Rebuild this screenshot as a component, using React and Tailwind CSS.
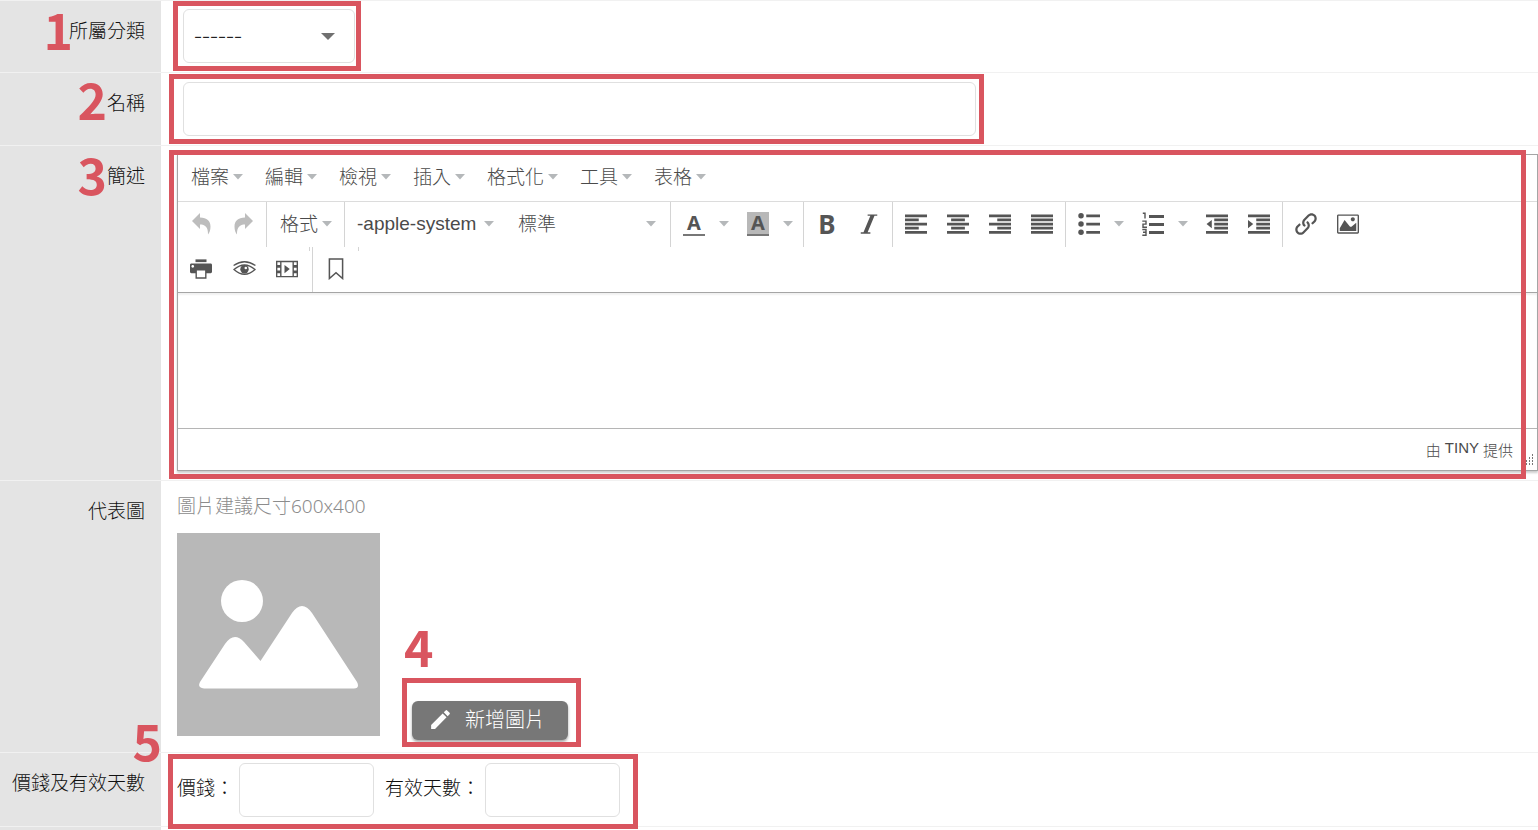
import React, { useState } from 'react'
import { ImItalic, ImPrinter, ImLink, ImImage } from 'react-icons/im'
import { MdEdit } from 'react-icons/md'

const menus = ['檔案', '編輯', '檢視', '插入', '格式化', '工具', '表格']

function Caret({ className = '' }) {
  return (
    <svg width="10" height="6" viewBox="0 0 10 6" className={`shrink-0 ${className}`} aria-hidden="true">
      <path d="M0 0h10L5 5.5z" fill="#b5b8ba" />
    </svg>
  )
}

// red frame drawn over a field
function Mark({ className }) {
  return <div className={`pointer-events-none absolute z-10 border-5 border-[#d9555f] ${className}`} />
}

function Step({ n, className }) {
  return (
    <span className={`pointer-events-none absolute z-10 text-[50px] leading-[50px] font-bold text-[#d9555f] font-['Noto_Sans_CJK_TC',sans-serif] ${className}`}>
      {n}
    </span>
  )
}

function Row({ label, id, step, children, className }) {
  return (
    <div className="flex border-t border-[#f1f1f1]">
      <div className="relative w-[161px] shrink-0 bg-[#e4e4e4] pt-[18px] pr-4 text-right text-[#111]">
        <label htmlFor={id} className="block leading-6">{label}</label>
        {step}
      </div>
      <div className={`min-w-0 flex-1 pl-4 ${className}`}>{children}</div>
    </div>
  )
}

function Group({ children, last }) {
  return (
    <div className={last ? 'flex px-0.5' : 'flex border-r border-[#d4d4d4] px-0.5'}>{children}</div>
  )
}

function Tool({ title, children }) {
  return (
    <button type="button" aria-label={title} className="flex w-[42px] items-center justify-center text-[#555]">
      {children}
    </button>
  )
}

function SplitTool({ title, children }) {
  return (
    <div className="flex">
      <Tool title={title}>{children}</Tool>
      <button type="button" aria-label={title + '選項'} className="flex w-[22px] items-center pl-1"><Caret /></button>
    </div>
  )
}

function Icon({ children }) {
  return (
    <svg width="22" height="22" viewBox="0 0 16 16" fill="currentColor" aria-hidden="true">{children}</svg>
  )
}

const AlignLeft = () => <Icon><path d="M0 1h16v2H0zM0 4h10v2H0zM0 7h16v2H0zM0 10h10v2H0zM0 13h16v2H0z" /></Icon>
const AlignCenter = () => <Icon><path d="M0 1h16v2H0zM3 4h10v2H3zM0 7h16v2H0zM3 10h10v2H3zM0 13h16v2H0z" /></Icon>
const AlignRight = () => <Icon><path d="M0 1h16v2H0zM6 4h10v2H6zM0 7h16v2H0zM6 10h10v2H6zM0 13h16v2H0z" /></Icon>
const Justify = () => <Icon><path d="M0 1h16v2H0zM0 4h16v2H0zM0 7h16v2H0zM0 10h16v2H0zM0 13h16v2H0z" /></Icon>
const Outdent = () => <Icon><path d="M0 1h16v2H0zM6 4h10v2H6zM6 7h10v2H6zM6 10h10v2H6zM0 13h16v2H0zM4.2 5v6L.4 8z" /></Icon>
const Indent = () => <Icon><path d="M0 1h16v2H0zM6 4h10v2H6zM6 7h10v2H6zM6 10h10v2H6zM0 13h16v2H0zM0 5v6l3.8-3z" /></Icon>

const Undo = () => (
  <svg width="19" height="22" viewBox="0 0 19 22" fill="#bdbdbd" aria-hidden="true">
    <path d="M0 8 8 0v4.500C15 4.500 18.500 8 18.500 13.500 18.500 17 17.500 20 16 21.500 16.200 14 13 11.500 8 11.500V16z" />
  </svg>
)

const Redo = () => (
  <svg width="19" height="22" viewBox="0 0 19 22" fill="#bdbdbd" aria-hidden="true">
    <path d="M19 8 11 0v4.500C4 4.500 .5 8 .5 13.500 .5 17 1.500 20 3 21.500 2.800 14 6 11.500 11 11.500V16z" />
  </svg>
)

const Bullets = () => (
  <Icon>
    <circle cx="2.2" cy="2" r="2" /><circle cx="2.2" cy="8" r="2" /><circle cx="2.2" cy="14" r="2" />
    <path d="M6 1h10v2H6zM6 7h10v2H6zM6 13h10v2H6z" />
  </Icon>
)

const Numbers = () => (
  <svg width="22" height="24" viewBox="0 0 22 24" fill="currentColor" aria-hidden="true">
    <path d="M7 3h15v3H7zM7 11h15v3H7zM7 19h15v3H7z" />
    <path d="M.8 1.200H3V6.500M.3 9.100H4V12.100H1V15.200H5M.3 17.500H4V23.200H.3M1 20.300H4" fill="none" stroke="currentColor" strokeWidth="1.400" />
  </svg>
)

const Eye = () => (
  <svg width="23" height="16" viewBox="0 0 23 16" fill="none" stroke="currentColor" aria-hidden="true">
    <path d="M.6 4.500Q11.500-3 22.400 4.500" strokeWidth="1.300" />
    <path d="M1 8.500Q11.500-.5 22 8.500 11.500 18 1 8.500z" strokeWidth="1.300" />
    <circle cx="11.500" cy="8.300" r="4.200" fill="currentColor" stroke="none" />
    <circle cx="12.800" cy="7" r="1.300" fill="#fff" stroke="none" />
  </svg>
)

const Media = () => (
  <Icon>
    <path fillRule="evenodd" d="M0 2v12h16V2zm3 11H1v-2h2zm0-4H1V7h2zm0-4H1V3h2zm9 8H4V3h8zm3 0h-2v-2h2zm0-4h-2V7h2zm0-4h-2V3h2z" />
    <path d="M6.2 5v6L10 8z" />
  </Icon>
)

const Bookmark = () => (
  <Icon><path d="M3.200.7h9.600v14.200L8 10.700l-4.800 4.200z" fill="none" stroke="currentColor" strokeWidth="1.1" /></Icon>
)

function Editor() {
  return (
    <div className="relative">
      <div className="border border-[#a5a5a5] bg-white text-[#4a4a4a] shadow-[0_2px_2px_rgba(0,0,0,0.2)]">
        <div className="flex h-[47px] items-center gap-[22px] border-b border-[#dcdcdc] pb-0.5 pl-[13px]">
          {menus.map(m => (
            <button type="button" key={m} className="flex items-center gap-1">{m}<Caret /></button>
          ))}
        </div>
        <div className="flex h-[45px] *:*:pb-0.5">
          <Group>
            <Tool title="復原"><Undo /></Tool>
            <Tool title="重做"><Redo /></Tool>
          </Group>
          <Group>
            <button type="button" className="flex w-[73px] items-center gap-1 pl-[11px]">格式<Caret /></button>
          </Group>
          <Group>
            <button type="button" className="flex w-[159px] items-center gap-2 pl-[10px] font-['Liberation_Sans',sans-serif] font-normal">
              -apple-system<Caret />
            </button>
            <button type="button" className="flex w-[162px] items-center justify-between pr-3 pl-3">標準<Caret /></button>
          </Group>
          <Group>
            <SplitTool title="文字顏色">
              <span className="w-[22px] border-b-2 border-[#777] font-['Noto_Sans',sans-serif] text-xl leading-[22px] font-bold">A</span>
            </SplitTool>
            <SplitTool title="背景顏色">
              <span className="w-[22px] border-b-2 border-[#777] bg-[#b8b8b8] font-['Noto_Sans',sans-serif] text-xl leading-[22px] font-bold">A</span>
            </SplitTool>
          </Group>
          <Group>
            <Tool title="粗體"><span className="font-['Noto_Sans',sans-serif] text-[26px] leading-7 font-bold">B</span></Tool>
            <Tool title="斜體"><ImItalic size={22} /></Tool>
          </Group>
          <Group>
            <Tool title="靠左對齊"><AlignLeft /></Tool>
            <Tool title="置中對齊"><AlignCenter /></Tool>
            <Tool title="靠右對齊"><AlignRight /></Tool>
            <Tool title="左右對齊"><Justify /></Tool>
          </Group>
          <Group>
            <SplitTool title="項目符號"><Bullets /></SplitTool>
            <SplitTool title="數字清單"><Numbers /></SplitTool>
            <Tool title="減少縮排"><Outdent /></Tool>
            <Tool title="增加縮排"><Indent /></Tool>
          </Group>
          <Group last>
            <Tool title="連結"><ImLink size={22} /></Tool>
            <Tool title="圖片"><ImImage size={22} /></Tool>
          </Group>
        </div>
        <div className="relative flex h-[46px] border-b border-[#a5a5a5] *:*:pb-0.5">
          <div className="flex gap-px border-r border-[#d4d4d4] pr-1 pl-0.5">
            <Tool title="列印"><ImPrinter size={22} /></Tool>
            <Tool title="預覽"><Eye /></Tool>
            <Tool title="媒體"><Media /></Tool>
          </div>
          <Group last>
            <Tool title="書籤"><Bookmark /></Tool>
          </Group>
          <i className="absolute top-0 left-[131px] h-1 w-px bg-[#d4d4d4]" />
          <i className="absolute top-0 left-[180px] h-1 w-px bg-[#d4d4d4]" />
        </div>
        <textarea id="summary" className="block h-[135px] w-full resize-none px-3 py-2 shadow-[inset_0_2px_2px_rgba(0,0,0,0.06)] outline-none" />
        <div className="relative flex h-[42px] items-center justify-end gap-1 border-t border-[#b5b5b5] pr-6 text-[15px]">
          <span>由</span>
          <a href="#tiny" className="pb-1 font-['Liberation_Sans',sans-serif] font-normal">TINY</a>
          <span>提供</span>
          <svg width="12" height="12" viewBox="0 0 12 12" className="absolute right-0.5 bottom-1" fill="#777" aria-hidden="true">
            <path d="M9 0h1v2H9zM6 3h1v2H6zM9 3h1v2H9zM3 6h1v2H3zM6 6h1v2H6zM9 6h1v2H9zM0 9h1v2H0zM3 9h1v2H3zM6 9h1v2H6zM9 9h1v2H9z" />
          </svg>
        </div>
      </div>
      <Mark className="-top-1 right-3 -bottom-2 -left-2" />
    </div>
  )
}

const box = 'h-[54px] rounded-md border border-[#e0e0e0] bg-white px-2.5 outline-none'

export default function App() {
  const [name, setName] = useState('')
  const [price, setPrice] = useState('')
  const [days, setDays] = useState('')

  return (
    <form className="flex min-h-screen flex-col bg-white font-['Noto_Sans','Noto_Sans_CJK_TC',sans-serif] text-[19px] leading-6 font-light">
      <Row label="所屬分類" id="category" className="pt-2 pb-[9px]" step={<Step n="1" className="top-0.5 right-[88px]" />}>
        <div className="relative ml-1.5 w-[172px]">
          <select id="category" className={`${box} block w-full appearance-none pb-1 font-['Noto_Sans_CJK_TC',sans-serif] text-2xl text-[#222]`}>
            <option>------</option>
          </select>
          <svg width="14" height="8" viewBox="0 0 14 8" className="pointer-events-none absolute top-6 right-5" aria-hidden="true">
            <path d="M0 0h14L7 7z" fill="#707070" />
          </svg>
          <Mark className="-top-2 -right-1.5 -bottom-2 -left-2.5" />
        </div>
      </Row>

      <Row label="名稱" id="name" className="py-[9px]" step={<Step n="2" className="top-0 right-[54px]" />}>
        <div className="relative ml-1.5 w-[793px]">
          <input id="name" value={name} onChange={e => setName(e.target.value)} className={`${box} block w-full`} />
          <Mark className="-top-2 -right-2 -bottom-2 -left-3.5" />
        </div>
      </Row>

      <Row label="簡述" id="summary" className="pt-2 pb-[9px]" step={<Step n="3" className="top-0.5 right-[54px]" />}>
        <Editor />
      </Row>

      <Row label="代表圖" id="picture" className="pt-[13px] pb-4">
        <p className="pb-[15px] text-[#8c8c8c]">圖片建議尺寸600x400</p>
        <div className="flex items-end">
          <svg viewBox="0 0 203 203" className="size-[203px]" role="img" aria-label="代表圖">
            <path d="M0 0h203v203H0z" fill="#b8b8b8" />
            <circle cx="65" cy="68" r="21" fill="#fff" />
            <path d="M23 149 48 111Q57 98 67 109L83.500 128 115 80Q125 66 135 80L180 149Q183 155 177 155.500H27Q20 155 23 149Z" fill="#fff" />
          </svg>
          <div className="relative ml-8">
            <button id="picture" type="button" className="-mb-1 flex h-[39px] w-[156px] items-center gap-3 rounded-md bg-[#777] pb-0.5 pl-4 text-xl text-white shadow-[0_2px_3px_rgba(0,0,0,0.35)]">
              <MdEdit size={25} />新增圖片
            </button>
            <Mark className="-top-[23px] -right-[13px] -bottom-[11px] -left-2.5" />
            <Step n="4" className="-top-[81px] -left-2" />
          </div>
        </div>
      </Row>

      <Row label="價錢及有效天數" id="price" className="pt-2.5 pb-[9px]" step={<Step n="5" className="-top-[39px] -right-px" />}>
        <div className="relative flex w-[443px] items-center justify-between text-[#111]">
          <label htmlFor="price" className="pb-1">價錢：</label>
          <input id="price" value={price} onChange={e => setPrice(e.target.value)} className={`${box} mr-1.5 w-[135px]`} />
          <label htmlFor="days" className="pb-1">有效天數：</label>
          <input id="days" value={days} onChange={e => setDays(e.target.value)} className={`${box} w-[135px]`} />
          <Mark className="-top-[9px] -right-[18px] -bottom-3 -left-[9px]" />
        </div>
      </Row>

      <div className="flex flex-1 border-t border-[#f1f1f1]">
        <div className="w-[161px] bg-[#e4e4e4]" />
      </div>
    </form>
  )
}
